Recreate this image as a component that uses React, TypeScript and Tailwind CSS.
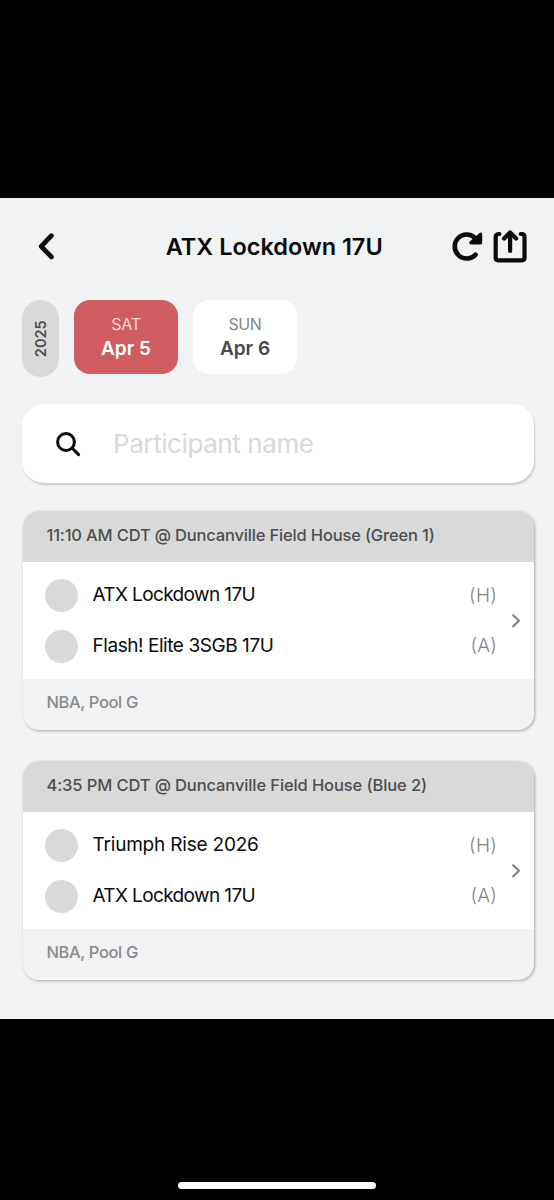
interface Team {
  name: string;
  side: string;
  nameClass: string;
}

interface Game {
  title: string;
  titleClass: string;
  pool: string;
  teams: Team[];
}

const games: Game[] = [
  {
    title: '11:10 AM CDT @ Duncanville Field House (Green 1)',
    titleClass: 'tracking-[-0.17px]',
    pool: 'NBA, Pool G',
    teams: [
      { name: 'ATX Lockdown 17U', side: '(H)', nameClass: 'tracking-[-0.62px]' },
      { name: 'Flash! Elite 3SGB 17U', side: '(A)', nameClass: 'tracking-[-0.44px]' },
    ],
  },
  {
    title: '4:35 PM CDT @ Duncanville Field House (Blue 2)',
    titleClass: 'tracking-[-0.11px]',
    pool: 'NBA, Pool G',
    teams: [
      { name: 'Triumph Rise 2026', side: '(H)', nameClass: 'tracking-[-0.2px]' },
      { name: 'ATX Lockdown 17U', side: '(A)', nameClass: 'tracking-[-0.62px]' },
    ],
  },
];

function Header() {
  return (
    <header className="flex h-[102px] items-center pr-[27px] pb-[6px] pl-[37px]">
      <button aria-label="Back" className="w-[61px]">
        <svg className="h-[30px] w-5" viewBox="0 0 20 30" fill="none" stroke="#0b0b0b" strokeWidth="4.8" strokeLinecap="round" strokeLinejoin="round">
          <path d="M14.400 4.700 4.200 15.300l10.200 10.600" />
        </svg>
      </button>
      <h1 className="flex-1 pt-[2px] text-center text-[23.5px] font-semibold whitespace-nowrap text-[#0b0b0b]">ATX Lockdown 17U</h1>
      <div className="flex w-[76.5px] items-center justify-between">
        {/* Refresh */}
        <button aria-label="Refresh">
          <svg className="h-[34px] w-8" viewBox="0 0 32 34" fill="none">
            <path d="M24.600 25.600A12 12 0 1 1 24 8.800" stroke="#0b0b0b" strokeWidth="4.6" strokeLinecap="round" />
            <path d="M29.600 5.200v8.600H19.800Z" fill="#0b0b0b" stroke="#0b0b0b" strokeWidth="3.200" strokeLinejoin="round" />
          </svg>
        </button>
        {/* Share */}
        <button aria-label="Share">
          <svg className="h-[34px] w-[34px]" viewBox="0 0 34 34" fill="none" stroke="#0b0b0b" strokeWidth="4.200" strokeLinecap="round" strokeLinejoin="round">
            <path d="M6.400 5H5.500C3.700 5 2.700 6.200 2.700 8V28.800Q2.700 31.300 5.200 31.300H29Q31.500 31.300 31.500 28.800V8C31.500 6.200 30.500 5 28.700 5H27.800" />
            <path d="M17.100 22V3.600M11.100 9.600 17.100 3.600 23.100 9.600" />
          </svg>
        </button>
      </div>
    </header>
  );
}

function DatePicker() {
  return (
    <div className="flex items-start gap-[15px] px-[22px]">
      <div className="flex h-[77px] w-[37px] items-center justify-center rounded-full bg-[#d9d9d9]">
        <span className="-rotate-90 pt-px text-[14.5px] leading-none font-semibold text-[#4c4c4c]">2025</span>
      </div>
      <button className="flex h-[74px] w-[104px] flex-col items-center rounded-2xl bg-[#cf5d60] pt-3">
        <span className="text-[16px] leading-6 tracking-[-0.2px] text-[#f7d9d9]">SAT</span>
        <span className="mt-px text-[19px] leading-6 font-semibold text-white">Apr 5</span>
      </button>
      <button className="flex h-[74px] w-[104px] flex-col items-center rounded-2xl bg-white pt-3">
        <span className="text-[16px] leading-6 tracking-[-0.4px] text-[#858585]">SUN</span>
        <span className="mt-px text-[19px] leading-6 font-semibold text-[#484848]">Apr 6</span>
      </button>
    </div>
  );
}

function SearchBar() {
  return (
    <label className="mt-[27px] mr-5 ml-[22px] flex h-[79px] items-center rounded-[22px] bg-white pl-[33px] shadow-[1px_2px_2px_rgba(0,0,0,0.17)]">
      <svg className="mt-px h-[26px] w-[26px] shrink-0" viewBox="0 0 26 26" fill="none" stroke="#0b0b0b" strokeWidth="3" strokeLinecap="round">
        <circle cx="11" cy="11" r="8.400" />
        <path d="m17.300 17.300 6.300 6.300" />
      </svg>
      <input
        className="ml-8 min-w-0 flex-1 bg-transparent text-[26px] font-normal tracking-[-0.42px] outline-none placeholder:text-[#d9d9d9]"
        placeholder="Participant name"
      />
    </label>
  );
}

function GameCard({ game }: { game: Game }) {
  return (
    <article className="overflow-hidden rounded-2xl bg-[#f1f2f4] shadow-[1px_1px_3px_rgba(0,0,0,0.3)]">
      <div className="flex h-[51px] items-center bg-[#d9d9d9] pb-[2px] pl-[23.5px]">
        <h2 className={`text-[16.5px] font-medium whitespace-nowrap text-[#4f4f4f] ${game.titleClass}`}>{game.title}</h2>
      </div>
      <div className="flex h-[117px] items-center bg-white pt-px pr-[13px] pl-[22px]">
        <div className="flex flex-1 flex-col gap-[17.5px]">
          {game.teams.map((team) => (
            <div key={team.name} className="flex h-[33px] items-center">
              <span className="h-[33px] w-[33px] rounded-full bg-[#d9d9d9]" />
              <span className={`ml-[14.5px] flex-1 pb-[2px] text-[19px] leading-[31px] whitespace-nowrap text-[#0b0b0b] ${team.nameClass}`}>{team.name}</span>
              <span className="text-[19px] font-light tracking-[0.2px] text-[#858585]">{team.side}</span>
            </div>
          ))}
        </div>
        <svg className="ml-[14px] h-4 w-[10px]" viewBox="0 0 10 16" fill="none" stroke="#858585" strokeWidth="2.200" strokeLinecap="round" strokeLinejoin="round">
          <path d="M2.200 2.200 8 7.800l-5.800 5.600" />
        </svg>
      </div>
      <div className="flex h-[51px] items-center pb-1 pl-[23.5px] text-[16.5px] font-medium tracking-[-0.38px] text-[#8a8a8a]">{game.pool}</div>
    </article>
  );
}

export default function App() {
  return (
    <div className="flex h-[1200px] w-[554px] flex-col bg-black font-['Inter','Liberation_Sans',sans-serif]">
      <main className="mt-[198px] h-[821px] bg-[#f1f2f4]">
        <Header />
        <DatePicker />
        <SearchBar />
        <div className="mt-7 mr-5 ml-[23px] flex flex-col gap-[31px]">
          {games.map((game) => (
            <GameCard key={game.title} game={game} />
          ))}
        </div>
      </main>
      {/* Home indicator */}
      <div className="mx-auto mt-auto mb-[11px] h-[7px] w-[198px] rounded-full bg-white" />
    </div>
  );
}
